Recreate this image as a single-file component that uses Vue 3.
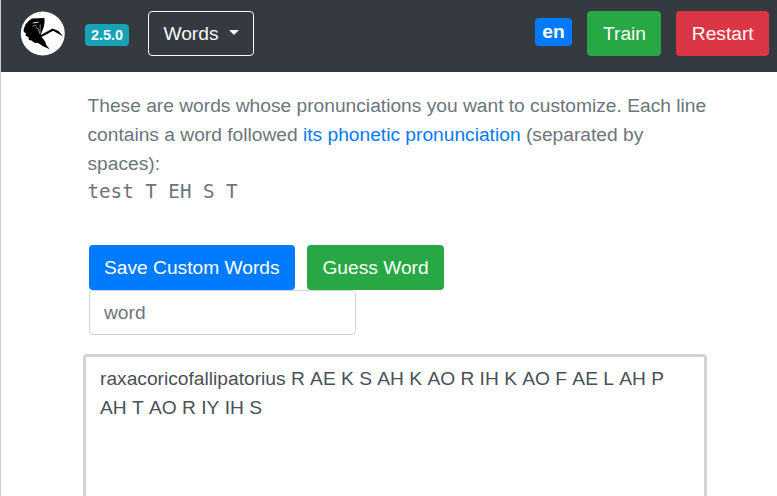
<script setup>
import { ref } from 'vue'

const version = '2.5.0'
const word = ref('')
const customWords = ref('raxacoricofallipatorius R AE K S AH K AO R IH K AO F AE L AH P AH T AO R IY IH S')
</script>

<template>
  <div class="page">
    <nav class="navbar">
      <svg class="logo" viewBox="0 0 60 60" aria-label="Logo">
        <circle cx="30.8" cy="29.5" r="22" fill="#fff" />
        <path
          fill="#000"
          d="M11.7 25 L13.5 20.5 L16.5 17 L20 14.5 L26 14.3 L32.4 14 L32.6 18.5 L31.6 23.5 L29.6 28.5 L28.9 31.1 L40.6 24.4 L46.5 27 L51.2 32.4 L45.5 29.2 L41.1 26.8 L29.6 33 L33.2 37.5 L34.3 41 L37.8 45.3 L31.5 42.5 L26 39 L22.5 38.7 L19.5 36.5 L16.9 36 L16.5 33.2 L13.5 31.5 L13.9 29.2 L11.8 28 Z"
        />
        <path fill="#ccc" d="M19.5 19.2 L22.5 18.1 L26.5 17.8 L27.2 18.6 L23 19.3 Z" />
        <path fill="none" stroke="#bbb" stroke-width=".7" d="M20.5 22.2 L24.5 21.2 M28.2 20.5 L28 29.7 L26 24.5 L23.6 23.3" />
      </svg>
      <span class="badge version">{{ version }}</span>
      <button class="btn outline">Words<span class="caret"></span></button>
      <span class="badge lang">en</span>
      <button class="btn green train">Train</button>
      <button class="btn red">Restart</button>
    </nav>
    <main class="content">
      <p class="intro">
        These are words whose pronunciations you want to customize. Each line contains a word followed
        <a href="#">its phonetic pronunciation</a> (separated by spaces):<br />
        <code>test T EH S T</code>
      </p>
      <div class="actions">
        <button class="btn blue">Save Custom Words</button>
        <button class="btn green">Guess Word</button>
      </div>
      <input v-model="word" class="word" type="text" placeholder="word" />
      <textarea v-model="customWords" class="words" spellcheck="false"></textarea>
    </main>
  </div>
</template>

<style>
body {
  margin: 0;
  background: #fff;
  overflow: hidden;
}
</style>

<style scoped>
.page,
.page * {
  box-sizing: border-box;
}
.page {
  height: 496px;
  overflow: hidden;
  border-left: 1px solid #ccc;
  font-family: "Liberation Sans", Arial, sans-serif;
  font-size: 19.2px;
  line-height: 28.8px;
  color: #6c757d;
}
.navbar {
  display: flex;
  align-items: flex-start;
  height: 72px;
  padding: 11px 8px 0 11px;
  background: #343a40;
}
.logo {
  width: 60px;
  height: 60px;
  margin-top: -7px;
}
.badge {
  color: #fff;
  font-weight: 700;
  text-align: center;
  border-radius: 4px;
}
.version {
  width: 44px;
  height: 22px;
  margin: 13px 19px 0 13px;
  background: #17a2b8;
  font-size: 14.4px;
  line-height: 22px;
}
.lang {
  width: 37px;
  height: 28px;
  margin: 7px 15px 0 auto;
  background: #007bff;
  font-size: 19.2px;
  line-height: 28px;
}
.btn {
  height: 45px;
  padding: 0 14.4px;
  border: 1px solid transparent;
  border-radius: 4px;
  color: #fff;
  font: inherit;
  line-height: 43px;
  white-space: nowrap;
}
.outline {
  width: 106px;
  background: transparent;
  border-color: #f8f9fa;
  color: #f8f9fa;
  text-align: left;
}
.caret {
  display: inline-block;
  margin-left: 10.6px;
  vertical-align: 5px;
  border: 5px solid transparent;
  border-top-color: #f8f9fa;
  border-bottom: 0;
}
.green {
  background: #28a745;
}
.train {
  width: 74px;
  padding: 0 0 0 15px;
  text-align: left;
}
.red {
  width: 93px;
  margin-left: 15px;
  padding: 0 0 0 14.8px;
  background: #dc3545;
  text-align: left;
}
.blue {
  width: 206px;
  padding: 0 14px;
  background: #007bff;
  text-align: left;
}
.content {
  display: flex;
  flex-direction: column;
  align-items: flex-start;
  padding: 20px 70px 0 82px;
}
.intro {
  width: 625px;
  height: 134px;
  margin: 0 0 19px;
  padding-left: 4.5px;
}
.intro a {
  color: #007bff;
  text-decoration: none;
}
.intro code {
  font-family: "DejaVu Sans Mono", monospace;
  font-size: 19.2px;
}
.actions {
  display: flex;
  gap: 12px;
  margin-left: 6px;
}
.word {
  width: 267px;
  height: 45px;
  margin: 0 0 19px 6px;
  padding: 0 14px;
  border: 1px solid #ced4da;
  border-radius: 4px;
  outline: 0;
  background: #fff;
  color: #495057;
  font: inherit;
}
.word::placeholder {
  color: #6c757d;
  opacity: 1;
}
.words {
  width: 624px;
  height: 240px;
  padding: 8px 28px 7px 14px;
  border: 3px solid #ced4da;
  border-radius: 4px;
  outline: 0;
  resize: none;
  overflow: hidden;
  background: #fff;
  color: #495057;
  font: inherit;
  font-kerning: none;
}
</style>
